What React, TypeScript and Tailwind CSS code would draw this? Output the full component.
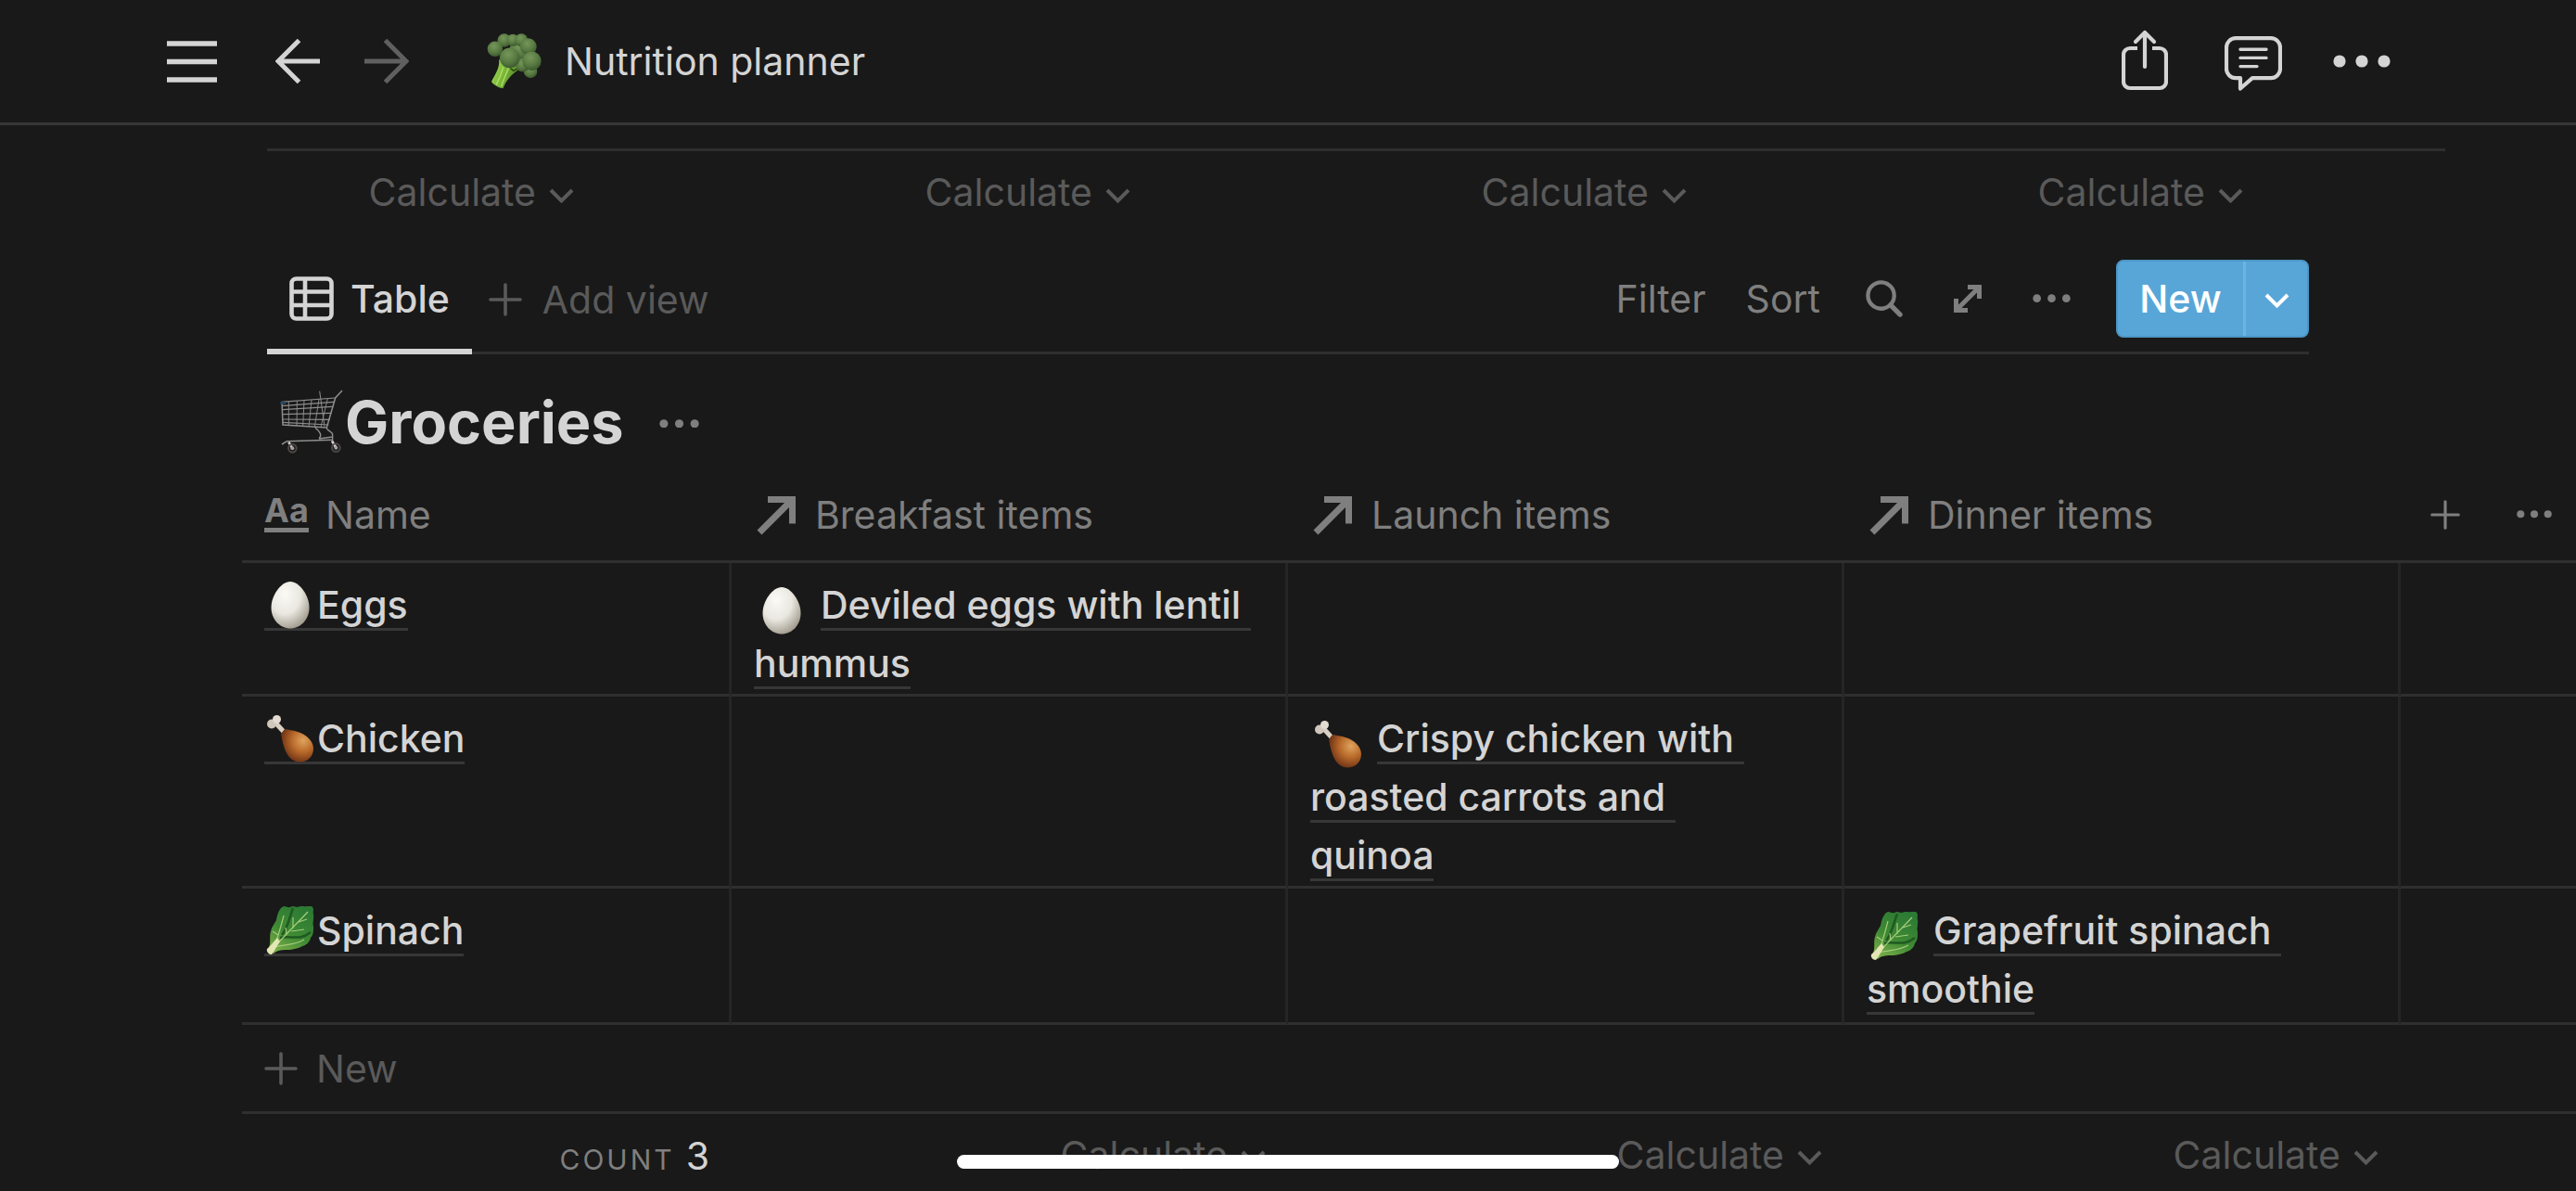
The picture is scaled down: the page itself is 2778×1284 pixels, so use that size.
import type { ReactNode } from 'react';

type FoodName = 'egg' | 'chicken' | 'spinach';

interface Recipe {
  column: 'breakfast' | 'launch' | 'dinner';
  title: string;
}

interface Grocery {
  name: string;
  food: FoodName;
  recipe: Recipe;
}

const groceries: Grocery[] = [
  { name: 'Eggs', food: 'egg', recipe: { column: 'breakfast', title: 'Deviled eggs with lentil hummus' } },
  { name: 'Chicken', food: 'chicken', recipe: { column: 'launch', title: 'Crispy chicken with roasted carrots and \nquinoa' } },
  { name: 'Spinach', food: 'spinach', recipe: { column: 'dinner', title: 'Grapefruit spinach smoothie' } },
];

const columns = [
  { key: 'breakfast', label: 'Breakfast items' },
  { key: 'launch', label: 'Launch items' },
  { key: 'dinner', label: 'Dinner items' },
] as const;

function Dots({ className }: { className: string }) {
  return (
    <svg viewBox="0 0 62 14" className={className} fill="currentColor" aria-hidden="true">
      <circle cx="7" cy="7" r="6.6" />
      <circle cx="31" cy="7" r="6.6" />
      <circle cx="55" cy="7" r="6.6" />
    </svg>
  );
}

function Plus({ className }: { className: string }) {
  return (
    <svg viewBox="0 0 36 36" className={className} stroke="currentColor" strokeWidth="3.6" strokeLinecap="round" aria-hidden="true">
      <path d="M18 2v32M2 18h32" />
    </svg>
  );
}

function Chevron({ className }: { className: string }) {
  return (
    <svg viewBox="0 0 27 17" className={className} fill="none" stroke="currentColor" strokeWidth="4" aria-hidden="true">
      <path d="M2 2l11.500 11.500L25 2" />
    </svg>
  );
}

function RelationArrow() {
  return (
    <svg viewBox="0 0 48 48" className="size-12 shrink-0" fill="none" stroke="currentColor" strokeWidth="7" aria-hidden="true">
      <path d="M15 7.500h26.500v26M41 8L6 43" />
    </svg>
  );
}

function Broccoli() {
  return (
    <svg viewBox="76 54 180 182" className="size-[60px] shrink-0" aria-hidden="true">
      <defs>
        <radialGradient id="floret" cx="42%" cy="32%" r="70%">
          <stop offset="0" stopColor="#76965a" />
          <stop offset="0.600" stopColor="#587a42" />
          <stop offset="1" stopColor="#3a562c" />
        </radialGradient>
        <linearGradient id="stem" x1="0" y1="0" x2="1" y2="0.400">
          <stop offset="0" stopColor="#a6d660" />
          <stop offset="0.500" stopColor="#7fbd3a" />
          <stop offset="1" stopColor="#558f25" />
        </linearGradient>
      </defs>
      <path d="M115 140c3 28-14 50-25 72 8 12 24 20 38 22 10-24 24-44 50-60l-12-24z" fill="url(#stem)" />
      <path d="M128 164c-4 24-14 38-22 58M146 168c-8 20-16 34-24 60" stroke="#b4dd70" strokeWidth="4" fill="none" />
      <path d="M152 168l10 8 12-6" stroke="#2f4a1c" strokeWidth="5" fill="none" />
      <g fill="url(#floret)">
        <circle cx="183" cy="110" r="34" />
        <circle cx="132" cy="77" r="22" />
        <circle cx="160" cy="76" r="20" />
        <circle cx="188" cy="76" r="21" />
        <circle cx="102" cy="105" r="25" />
        <circle cx="211" cy="97" r="27" />
        <circle cx="218" cy="178" r="22" />
        <circle cx="192" cy="158" r="22" />
        <circle cx="222" cy="144" r="31" />
        <circle cx="150" cy="134" r="33" />
      </g>
    </svg>
  );
}

function Cart() {
  return (
    <svg viewBox="64 28 204 210" className="h-[70px] w-[68px] shrink-0" fill="none" stroke="#8f8d8d" strokeWidth="4" aria-hidden="true">
      <path d="M68 68l174-13M70 81l168-13M71 93l163-10M71 108l160-4M72 124l154 1M73 134l148 8" strokeWidth="3.500" />
      <path d="M70 68l3 74 142 9 28-96 22-24" strokeWidth="4.500" />
      <path d="M92 67v76M119 65l-1 80M142 63l-4 83M166 61l-9 87M190 59l-14 90M218 57l-22 92" strokeWidth="2.800" />
      <path d="M192 33l16 114" strokeWidth="3" />
      <path d="M178 152c18 14 22 26 12 34M214 152c6 12 20 12 20 22v18" />
      <path d="M70 205l16-10 148-4M190 187l44-6" strokeWidth="4.500" />
      <path d="M65 71h17" stroke="#234a66" strokeWidth="8" />
      <path d="M92 198l12 20M232 194l12 20" stroke="#d3d1d1" strokeWidth="8" />
      <circle cx="104" cy="218" r="13" stroke="#4d4745" strokeWidth="6" />
      <circle cx="245" cy="216" r="13" stroke="#4d4745" strokeWidth="6" />
      <circle cx="104" cy="218" r="6" fill="#a5a09e" stroke="none" />
      <circle cx="245" cy="216" r="6" fill="#a5a09e" stroke="none" />
    </svg>
  );
}

function Egg({ className }: { className: string }) {
  return (
    <svg viewBox="0 0 52 52" className={className} aria-hidden="true">
      <defs>
        <radialGradient id="shell" cx="36%" cy="28%" r="75%">
          <stop offset="0" stopColor="#fbfaf5" />
          <stop offset="0.550" stopColor="#e9e7e0" />
          <stop offset="1" stopColor="#a39e90" />
        </radialGradient>
      </defs>
      <path d="M26 1C36 1 46.500 16 46.500 29S37 51.500 26 51.500 5.500 42 5.500 29 16 1 26 1z" fill="url(#shell)" />
    </svg>
  );
}

function Drumstick({ className }: { className: string }) {
  return (
    <svg viewBox="0 0 52 52" className={className} aria-hidden="true">
      <defs>
        <radialGradient id="meat" cx="68%" cy="35%" r="70%">
          <stop offset="0" stopColor="#e0a45e" />
          <stop offset="0.500" stopColor="#b8692a" />
          <stop offset="1" stopColor="#6b3014" />
        </radialGradient>
      </defs>
      <path d="M9 8l11 12" stroke="#d9cfc4" strokeWidth="5" />
      <circle cx="6" cy="10.500" r="5" fill="#cfc6bc" />
      <circle cx="11.500" cy="5.500" r="4.500" fill="#e3dbd2" />
      <path d="M20 16l-4 5c2 12 5 23 12 28 9 6 23 1 23-12 0-9-9-16-17-18-6-2-10-2-14-3z" fill="url(#meat)" />
    </svg>
  );
}

function Spinach({ className }: { className: string }) {
  return (
    <svg viewBox="0 0 52 52" className={className} aria-hidden="true">
      <defs>
        <linearGradient id="leaf" x1="0.200" y1="1" x2="0.700" y2="0">
          <stop offset="0" stopColor="#7fb04c" />
          <stop offset="0.450" stopColor="#3f8a33" />
          <stop offset="1" stopColor="#2c7a35" />
        </linearGradient>
      </defs>
      <path
        d="M2 46C6 40 3 34 5 27c1-5 4-8 6-12 1-6 3-13 8-15 3 0 5 2 7 1 3-2 5 0 8 0 4-2 7 0 10-1 4-1 7 0 7 4-1 4 1 6 0 9 0 4-1 5 0 9 0 5 0 9-3 12-1 5-5 8-9 9-5 3-9 3-14 4-7 0-13 0-17 4z"
        fill="url(#leaf)"
      />
      <path d="M17 31C24 22 25 12 29 2M15 34c11-3 21 4 33-6" stroke="#1f5a22" strokeWidth="2.500" fill="none" />
      <path d="M6 48C16 35 32 20 45 6M10 42c3-11 6-20 9-32M9 44c12-3 22-2 32-8M22 31l-1-8M29 24V12M27 27l14-2M35 17l9-3M13 31l-6-4" stroke="#a5cc7a" strokeWidth="1.200" fill="none" />
      <path d="M1 46c4-3 7-8 11-12l3 4c-3 4-5 9-9 14-3 0-6-3-5-6z" fill="#e3e7b4" />
    </svg>
  );
}

function FoodIcon({ food, className }: { food: FoodName; className: string }) {
  if (food === 'egg') return <Egg className={className} />;
  if (food === 'chicken') return <Drumstick className={className} />;
  return <Spinach className={className} />;
}

function CalculateButton() {
  return (
    <button className="inline-flex items-center gap-[14px] text-[#5a5a5a]">
      Calculate
      <Chevron className="mt-2 w-[27px]" />
    </button>
  );
}

function IconButton({ label, children }: { label: string; children: ReactNode }) {
  return (
    <button aria-label={label} className="shrink-0 px-1.5">
      {children}
    </button>
  );
}

function TopBar() {
  return (
    <header className="flex h-[135px] items-center border-b-[3px] border-[#373737] pr-[200px] pl-[180px]">
      <button aria-label="Menu">
        <svg viewBox="0 0 54 45" className="w-[54px]" stroke="currentColor" strokeWidth="5.600" aria-hidden="true">
          <path d="M0 3h54M0 22.500h54M0 42h54" />
        </svg>
      </button>
      <button aria-label="Back" className="ml-[63px]">
        <svg viewBox="0 0 48 48" className="size-12" fill="none" stroke="currentColor" strokeWidth="5" aria-hidden="true">
          <path d="M48 24H4M25.500 1.500L3 24l22.500 22.500" />
        </svg>
      </button>
      <button aria-label="Forward" className="ml-12 text-[#606060]">
        <svg viewBox="0 0 48 48" className="size-12" fill="none" stroke="currentColor" strokeWidth="5" aria-hidden="true">
          <path d="M0 24h44M22.500 1.500L45 24 22.500 46.500" />
        </svg>
      </button>
      <a href="#" className="ml-[84px] flex items-center gap-6">
        <Broccoli />
        Nutrition planner
      </a>
      <div className="ml-auto flex items-center gap-[55px]">
        <button aria-label="Share" className="mr-1.5">
          <svg viewBox="0 0 50 68" className="h-[68px] w-[50px]" fill="none" stroke="currentColor" strokeWidth="4.200" aria-hidden="true">
            <path d="M17 20H9a7 7 0 0 0-7 7v29a7 7 0 0 0 7 7h32a7 7 0 0 0 7-7V27a7 7 0 0 0-7-7h-8" />
            <path d="M25 40V3M15 13L25 3l10 10" strokeLinecap="round" strokeLinejoin="round" />
          </svg>
        </button>
        <button aria-label="Comments" className="pt-1">
          <svg viewBox="0 0 62 59" className="w-[62px]" fill="none" stroke="currentColor" strokeWidth="4.200" strokeLinejoin="round" aria-hidden="true">
            <path d="M12 2.200h38a10 10 0 0 1 10 10v23a10 10 0 0 1-10 10H30L17 56.500V45.200h-5a10 10 0 0 1-10-10v-23a10 10 0 0 1 10-10z" />
            <path d="M17 14.200h28M17 23.400h28M17 32.600h18" strokeWidth="3.400" strokeLinecap="round" />
          </svg>
        </button>
        <button aria-label="More">
          <Dots className="w-[62px]" />
        </button>
      </div>
    </header>
  );
}

function ViewBar() {
  return (
    <div className="mx-72 mt-3 flex h-[117px] border-b-[3px] border-[#2f2f2f]">
      <button className="-mb-[3px] flex items-center gap-[18px] border-b-[6px] border-[#d4d4d4] px-6 pt-0.5 font-medium">
        <svg viewBox="0 0 48 48" className="size-12" fill="none" stroke="currentColor" strokeWidth="4.600" aria-hidden="true">
          <rect x="2.500" y="2.500" width="43" height="43" rx="5" />
          <path d="M17 2v44M2 16.500h44M2 31h44" />
        </svg>
        Table
      </button>
      <button className="ml-[18px] flex items-center gap-[22px] pt-0.5 text-[#5a5a5a]">
        <Plus className="size-9" />
        Add view
      </button>
      <div className="ml-auto flex items-center gap-[43px] text-[#7f7f7f]">
        <button>Filter</button>
        <button>Sort</button>
        <IconButton label="Search">
          <svg viewBox="0 0 41 41" className="w-10" fill="none" stroke="currentColor" strokeWidth="4.400" strokeLinecap="round" aria-hidden="true">
            <circle cx="17" cy="17" r="14.500" />
            <path d="M27.500 27.500L38 38" strokeWidth="5.400" />
          </svg>
        </IconButton>
        <IconButton label="Expand">
          <svg viewBox="0 0 30 30" className="w-[30px]" fill="none" stroke="currentColor" strokeWidth="5" aria-hidden="true">
            <path d="M15 2.500h12.500V15M2.500 15v12.500H15M27 3L3 27" />
          </svg>
        </IconButton>
        <IconButton label="View options">
          <Dots className="w-[41px]" />
        </IconButton>
        <div className="flex h-[84px] overflow-hidden rounded-lg border-2 border-[#4d96c6] bg-[#58a6d8] font-medium text-white">
          <button className="w-[135px]">New</button>
          <button aria-label="New options" className="flex w-[69px] items-center justify-center border-l-[3px] border-[#6fb4df]">
            <Chevron className="mt-1 w-[27px]" />
          </button>
        </div>
      </div>
    </div>
  );
}

function GroceriesTable() {
  return (
    <table className="w-full table-fixed border-separate border-spacing-0">
      <colgroup>
        <col className="w-[528px]" />
        <col className="w-[600px]" />
        <col className="w-[600px]" />
        <col className="w-[600px]" />
        <col />
      </colgroup>
      <thead className="text-left text-[#7f7f7f]">
        <tr className="h-[100px]">
          <th className="border-b-[3px] border-[#2f2f2f] px-6 pb-0.5 font-normal">
            <div className="flex items-center gap-[18px]">
              <span className="w-12 border-b-[5px] border-[#7f7f7f] pb-1 text-[36px] leading-[30px] font-bold">Aa</span>
              Name
            </div>
          </th>
          {columns.map((c) => (
            <th key={c.key} className="border-b-[3px] border-[#2f2f2f] px-6 pb-0.5 font-normal">
              <div className="flex items-center gap-[18px]">
                <RelationArrow />
                {c.label}
              </div>
            </th>
          ))}
          <th className="border-b-[3px] border-[#2f2f2f] pb-0.5 pl-8">
            <div className="flex items-center gap-[61px]">
              <button aria-label="Add column">
                <Plus className="w-8" />
              </button>
              <button aria-label="Column options">
                <Dots className="w-[38px]" />
              </button>
            </div>
          </th>
        </tr>
      </thead>
      <tbody className="leading-[63px] font-medium [&>tr:last-child>td]:pb-1">
        {groceries.map((g) => (
          <tr key={g.name} className="align-top">
            <td className="border-r-[3px] border-b-[3px] border-r-[#252525] border-b-[#2f2f2f] px-6 pt-[14px] pb-px">
              <a href="#" className="border-b-[3px] border-[#373737]">
                <FoodIcon food={g.food} className="mr-[3px] ml-0.5 inline size-[52px] align-[-11px]" />
                {g.name}
              </a>
            </td>
            {columns.map((c) => (
              <td key={c.key} className="border-r-[3px] border-b-[3px] border-r-[#252525] border-b-[#2f2f2f] px-6 pt-[14px] pb-px">
                {g.recipe.column === c.key && (
                  <>
                    <FoodIcon food={g.food} className="mr-4 ml-1 inline size-[52px] align-[-17px]" />
                    <a href="#" className="border-b-[3px] border-[#373737] whitespace-break-spaces">
                      {g.recipe.title}
                    </a>
                  </>
                )}
              </td>
            ))}
            <td className="border-b-[3px] border-[#2f2f2f]" />
          </tr>
        ))}
      </tbody>
      <tfoot className="text-[#5a5a5a]">
        <tr className="h-24">
          <td colSpan={5} className="border-b-[3px] border-[#2f2f2f] px-6">
            <button className="flex items-center gap-5">
              <Plus className="size-9" />
              New
            </button>
          </td>
        </tr>
        <tr className="h-[83px] text-right">
          <td className="px-6 pt-2.5 text-[#d4d4d4]">
            <span className="mr-3 text-[30px] tracking-widest text-[#7f7f7f] uppercase">Count</span>3
          </td>
          {columns.map((c) => (
            <td key={c.key} className="px-6 pt-1">
              <CalculateButton />
            </td>
          ))}
          <td />
        </tr>
      </tfoot>
    </table>
  );
}

export default function App() {
  return (
    <div className="min-h-screen overflow-hidden bg-[#191919] font-['Inter',sans-serif] text-[41px] leading-[52px] text-[#d4d4d4]">
      <TopBar />
      <main>
        <div className="mt-[25px] mr-[141px] ml-72 flex h-[93px] items-center border-t-[3px] border-[#2f2f2f] pb-0.5 text-right">
          <div className="w-[355px] pr-6">
            <CalculateButton />
          </div>
          {columns.map((c) => (
            <div key={c.key} className="w-[600px] pr-6">
              <CalculateButton />
            </div>
          ))}
        </div>
        <ViewBar />
        <div className="mx-72 flex h-[125px] items-center gap-0.5 pt-5 pl-[14px]">
          <Cart />
          <h2 className="text-[63px] leading-[76px] font-bold">Groceries</h2>
          <button aria-label="Database options" className="ml-9 pt-1 text-[#7f7f7f]">
            <Dots className="w-[43px]" />
          </button>
        </div>
        <div className="pl-[261px]">
          <GroceriesTable />
        </div>
      </main>
      <div className="fixed bottom-6 left-1/2 h-[15px] w-[714px] -translate-x-1/2 rounded-full bg-white" />
    </div>
  );
}
